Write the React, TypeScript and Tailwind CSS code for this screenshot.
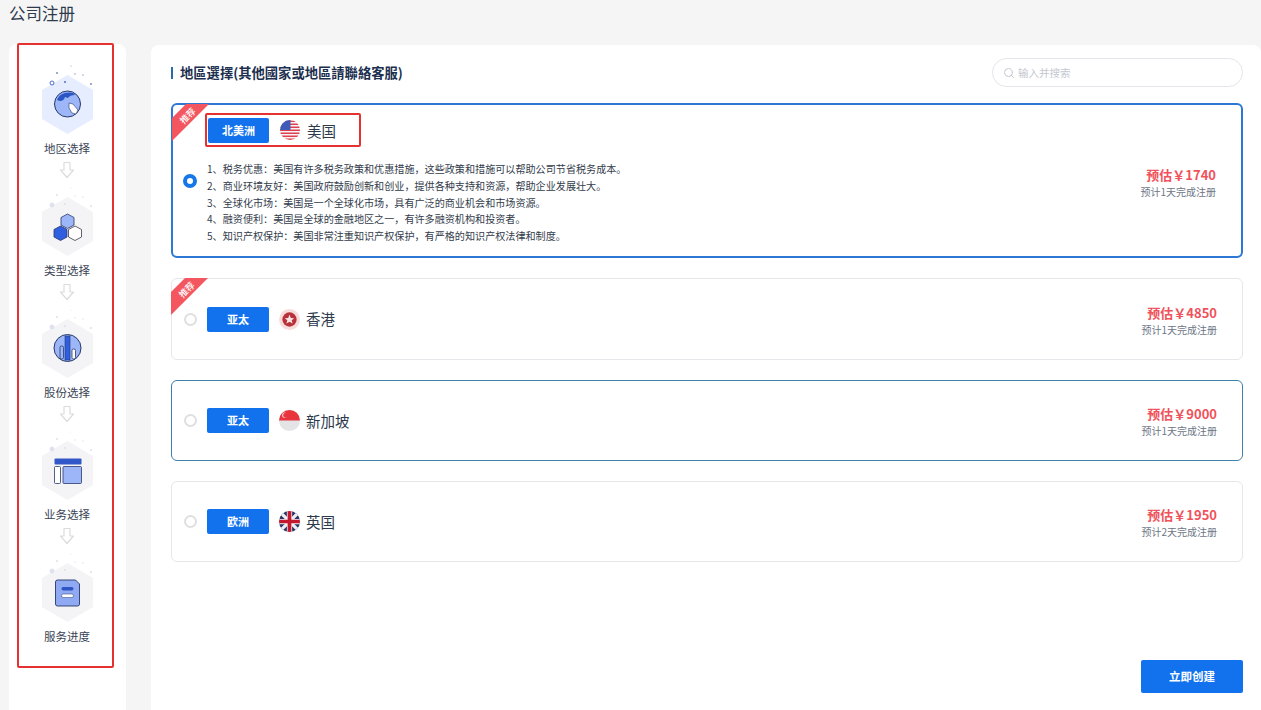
import { Search } from "lucide-react";
import type { ReactNode } from "react";

const font = "font-['Noto_Sans_CJK_SC','Noto_Sans',sans-serif]";

function Dots({ on }: { on: boolean }) {
  const c = on ? "#7f8fc0" : "#dfe1ea";
  return (
    <>
      <circle cx="57" cy="73" r="1" fill={c} />
      <circle cx="71" cy="66" r="0.5" fill={c} />
      <circle cx="75" cy="74" r="0.7" fill={c} />
      <circle cx="83" cy="75" r="0.7" fill={c} />
      <circle cx="91" cy="84" r="1" fill={c} />
      <circle cx="65" cy="82" r="1" fill={on ? "#4a6fd0" : "#dfe1ea"} />
      <circle cx="52" cy="83" r="2" fill={on ? "none" : "#dfe1f0"} stroke={on ? "#4a6fd0" : "#dfe1f0"} />
    </>
  );
}

function StepIcon({ on, children }: { on?: boolean; children: ReactNode }) {
  return (
    <svg width="62" height="72" viewBox="36 64 62 72" className="shrink-0">
      <polygon points="67.5,75 93,90 93,119 67.5,134 42,119 42,90" fill={on ? "#e6edfe" : "#f4f4f6"} />
      <Dots on={!!on} />
      {children}
    </svg>
  );
}

const globe = (
  <>
    <circle cx="67.5" cy="104" r="13" fill="#9db6f7" stroke="#27386b" strokeWidth="1" />
    <path d="M57 100c2-6 9-9 16-7l2 2c-3 0-6 1-7 3l-3-1c-1 3-3 4-5 4z" fill="#2a55c4" />
    <path d="M69 103l4 1 5 6-2 4-4-1-3-5z" fill="#fff" stroke="#27386b" strokeWidth="0.6" />
  </>
);
const cubes = (
  <>
    <polygon points="67.5,92 74,95.5 74,103 67.5,106.5 61,103 61,95.5" fill="#9db6f7" stroke="#27386b" strokeWidth="0.8" />
    <polygon points="60.5,104 67,107.5 67,115 60.5,118.500 54,115 54,107.5" fill="#2f5fe0" stroke="#27386b" strokeWidth="0.8" />
    <polygon points="75,104 81.500,107.5 81.500,115 75,118.500 68.500,115 68.500,107.5" fill="#fff" stroke="#3b3b4b" strokeWidth="0.8" />
  </>
);
const bars = (
  <>
    <circle cx="67.5" cy="104" r="13.500" fill="#9db6f7" stroke="#27386b" strokeWidth="1" />
    <rect x="65" y="92" width="5" height="24" fill="#2f5fe0" stroke="#27386b" strokeWidth="0.6" />
    <rect x="60" y="102" width="3.500" height="13" rx="1.500" fill="none" stroke="#27386b" strokeWidth="0.8" />
    <rect x="72" y="105" width="3.500" height="10" rx="1.500" fill="#fff" stroke="#27386b" strokeWidth="0.8" />
  </>
);
const panels = (
  <>
    <rect x="54.500" y="92.500" width="27" height="6" rx="1" fill="#3157c8" />
    <rect x="54.500" y="100.500" width="6" height="17" rx="1" fill="#fff" stroke="#27386b" strokeWidth="0.8" />
    <rect x="63" y="100.500" width="18.500" height="17" rx="1" fill="#9db6f7" stroke="#27386b" strokeWidth="0.8" />
  </>
);
const doc = (
  <>
    <path d="M55.500 94a2 2 0 0 1 2-2h18l4 4v20a2 2 0 0 1-2 2h-20a2 2 0 0 1-2-2z" fill="#8fa9f3" stroke="#27386b" strokeWidth="0.9" />
    <rect x="61.500" y="99" width="12" height="3.500" rx="1.700" fill="#2f55c4" />
    <rect x="61.500" y="106" width="12" height="3.500" rx="1.700" fill="#fff" stroke="#27386b" strokeWidth="0.5" />
  </>
);

function DownArrow() {
  return (
    <svg width="16" height="18" viewBox="0 0 16 18" className="mt-[6px] mb-[7px] shrink-0">
      <path d="M5 1.500h6v7.500h3.500L8 16.500 1.500 9H5z" fill="#fff" stroke="#dcdcde" strokeWidth="1.200" strokeLinejoin="round" />
    </svg>
  );
}

const steps = [
  { label: "地区选择", icon: globe, on: true },
  { label: "类型选择", icon: cubes },
  { label: "股份选择", icon: bars },
  { label: "业务选择", icon: panels },
  { label: "服务进度", icon: doc },
];

function FlagUS() {
  return (
    <svg width="20" height="20" viewBox="0 0 20 20" className="shrink-0">
      <defs>
        <clipPath id="us"><circle cx="10" cy="10" r="10" /></clipPath>
      </defs>
      <g clipPath="url(#us)">
        <rect width="20" height="20" fill="#f4f4f6" />
        {[0, 3, 6, 9, 12, 15, 18].map((y) => (
          <rect key={y} y={y + 0.5} width="20" height="1.500" fill="#e0404e" />
        ))}
        <rect width="10.500" height="10" fill="#3f5bb8" />
      </g>
    </svg>
  );
}

function FlagHK() {
  return (
    <svg width="21" height="21" viewBox="0 0 20 20" className="shrink-0">
      <circle cx="10" cy="10" r="10" fill="#f7dcdc" />
      <circle cx="10" cy="10" r="6.800" fill="#b8323c" />
      <path d="M10 5.500l1.300 3 3.200.2-2.400 2.100.8 3.100-2.900-1.700-2.900 1.700.8-3.100-2.400-2.100 3.200-.2z" fill="#f6e3e3" />
    </svg>
  );
}

function FlagSG() {
  return (
    <svg width="21" height="21" viewBox="0 0 20 20" className="shrink-0">
      <defs>
        <clipPath id="sg"><circle cx="10" cy="10" r="10" /></clipPath>
      </defs>
      <g clipPath="url(#sg)">
        <rect width="20" height="20" fill="#e4e4e6" />
        <rect width="20" height="10" fill="#e8343c" />
        <circle cx="5.500" cy="5" r="2.600" fill="#f5c9cb" />
        <circle cx="6.500" cy="5" r="2.400" fill="#e8343c" />
      </g>
    </svg>
  );
}

function FlagUK() {
  return (
    <svg width="21" height="21" viewBox="0 0 20 20" className="shrink-0">
      <defs>
        <clipPath id="uk"><circle cx="10" cy="10" r="10" /></clipPath>
      </defs>
      <g clipPath="url(#uk)">
        <rect width="20" height="20" fill="#2a3768" />
        <path d="M0 0L20 20M20 0L0 20" stroke="#f0f0f2" strokeWidth="3" />
        <path d="M10 0V20M0 10H20" stroke="#f0f0f2" strokeWidth="5" />
        <path d="M10 0V20M0 10H20" stroke="#c4182f" strokeWidth="3.500" />
      </g>
    </svg>
  );
}

function Ribbon() {
  return (
    <div className="absolute left-[-1px] top-[-1px] h-[38px] w-[38px] [clip-path:polygon(14px_0,37px_0,0_37px,0_14px)] bg-[#f4565f]">
      <span className="absolute left-[3px] top-[6px] block w-[26px] rotate-[-45deg] text-center text-[9px] leading-[12px] font-medium text-white">
        推荐
      </span>
    </div>
  );
}

function Radio({ on }: { on?: boolean }) {
  return on ? (
    <span className="block h-[14px] w-[14px] shrink-0 rounded-full border-[4px] border-[#1677e8] bg-white" />
  ) : (
    <span className="block h-[13px] w-[13px] shrink-0 rounded-full border-2 border-[#dedfe2] bg-white" />
  );
}

function Tag({ text, w }: { text: string; w: string }) {
  return (
    <span className={`flex h-[25px] ${w} shrink-0 items-center justify-center rounded-[2px] bg-[#1272ee] text-[11px] font-bold text-white`}>
      {text}
    </span>
  );
}

function Price({ price, days, top }: { price: string; days: number; top: string }) {
  return (
    <div className={`ml-auto ${top} flex shrink-0 flex-col items-end pr-[25px]`}>
      <p className="text-[13px] leading-[18px] font-bold text-[#f0525c]">预估￥{price}</p>
      <p className="mt-[1px] text-[10px] leading-[14px] text-[#6d7686]">预计{days}天完成注册</p>
    </div>
  );
}

const benefits = [
  "1、税务优惠：美国有许多税务政策和优惠措施，这些政策和措施可以帮助公司节省税务成本。",
  "2、商业环境友好：美国政府鼓励创新和创业，提供各种支持和资源，帮助企业发展壮大。",
  "3、全球化市场：美国是一个全球化市场，具有广泛的商业机会和市场资源。",
  "4、融资便利：美国是全球的金融地区之一，有许多融资机构和投资者。",
  "5、知识产权保护：美国非常注重知识产权保护，有严格的知识产权法律和制度。",
];

const regions = [
  { tag: "亚太", name: "香港", flag: <FlagHK />, price: "4850", days: 1, hot: true, border: "border-[#e6e7ea]", h: "h-[82px]", top: "mt-[3px]" },
  { tag: "亚太", name: "新加坡", flag: <FlagSG />, price: "9000", days: 1, hot: false, border: "border-[#3f7fa8]", h: "h-[81px]", top: "mt-[2px]" },
  { tag: "欧洲", name: "英国", flag: <FlagUK />, price: "1950", days: 2, hot: false, border: "border-[#e6e7ea]", h: "h-[81px]", top: "mt-[2px]" },
];

export default function App() {
  return (
    <div className={`${font} flex h-[710px] w-full flex-col overflow-hidden bg-[#f5f5f6]`}>
      <h1 className="h-[44px] shrink-0 pl-[9px] pt-[1px] text-[16.500px] leading-[24px] font-normal text-[#2d3a4c]">公司注册</h1>

      <div className="flex min-h-0 flex-1">
        <aside className="ml-[9px] h-full w-[117px] shrink-0 rounded-t-[8px] bg-white pl-[8px]">
          <div className="mt-[-1px] flex h-[625px] w-[97px] flex-col items-center rounded-[2px] border-2 border-[#e5312f] pl-[3px] pt-[19px]">
            {steps.map((s, i) => (
              <div key={s.label} className="flex flex-col items-center">
                <StepIcon on={s.on}>{s.icon}</StepIcon>
                <p className="mt-[5px] h-[14px] text-[11.500px] leading-[14px] text-[#3a4456]">{s.label}</p>
                {i < steps.length - 1 && <DownArrow />}
              </div>
            ))}
          </div>
        </aside>

        <main className="ml-[25px] mt-[1px] flex min-w-0 flex-1 flex-col rounded-t-[8px] bg-white pl-[20px] pr-[18px]">
          <div className="mt-[13px] flex h-[29px] shrink-0 items-center">
            <span className="h-[12px] w-[2px] shrink-0 bg-[#2a6ba8]" />
            <h2 className="ml-[7px] text-[13.300px] font-bold text-[#1c2f4f]">地區選擇(其他國家或地區請聯絡客服)</h2>
            <div className="ml-auto flex h-[29px] w-[251px] items-center gap-[3px] rounded-full border border-[#e4e5ea] pl-[10px]">
              <Search className="h-[12px] w-[12px] text-[#c4c7cf]" strokeWidth={2} />
              <span className="text-[10.500px] text-[#c4c7cf]">输入并搜索</span>
            </div>
          </div>

          <div className="mt-[16px] flex shrink-0 flex-col gap-[20px]">
            <div className="relative flex h-[155px] items-center rounded-[6px] border-2 border-[#2c78d4] pl-[10px]">
              <Ribbon />
              <Radio on />
              <div className="ml-[10px] flex flex-col self-start">
                <div className="ml-[-2px] mt-[8px] flex h-[34px] w-[156px] items-center rounded-[2px] border-2 border-[#e5312f] pl-[1px]">
                  <Tag text="北美洲" w="w-[61px]" />
                  <span className="ml-[11px]"><FlagUS /></span>
                  <span className="ml-[7px] mt-[1px] text-[14.500px] text-[#2d3a4c]">美国</span>
                </div>
                <ul className="mt-[14px] text-[10.100px] leading-[16.800px] text-[#333c4c]">
                  {benefits.map((b) => (
                    <li key={b}>{b}</li>
                  ))}
                </ul>
              </div>
              <Price price="1740" days={1} top="mt-[3px]" />
            </div>

            {regions.map((r) => (
              <div key={r.name} className={`relative flex ${r.h} items-center rounded-[6px] border ${r.border} pl-[12px]`}>
                {r.hot && <Ribbon />}
                <Radio />
                <span className="ml-[10px]"><Tag text={r.tag} w="w-[62px]" /></span>
                <span className="ml-[10px]">{r.flag}</span>
                <span className="ml-[6px] text-[14.500px] text-[#2d3a4c]">{r.name}</span>
                <Price price={r.price} days={r.days} top={r.top} />
              </div>
            ))}
          </div>

          <button className="mb-[17px] mt-auto flex h-[33px] w-[102px] shrink-0 items-center justify-center self-end rounded-[2px] bg-[#1272ee] text-[11.500px] font-bold text-white">
            立即创建
          </button>
        </main>
      </div>
    </div>
  );
}
